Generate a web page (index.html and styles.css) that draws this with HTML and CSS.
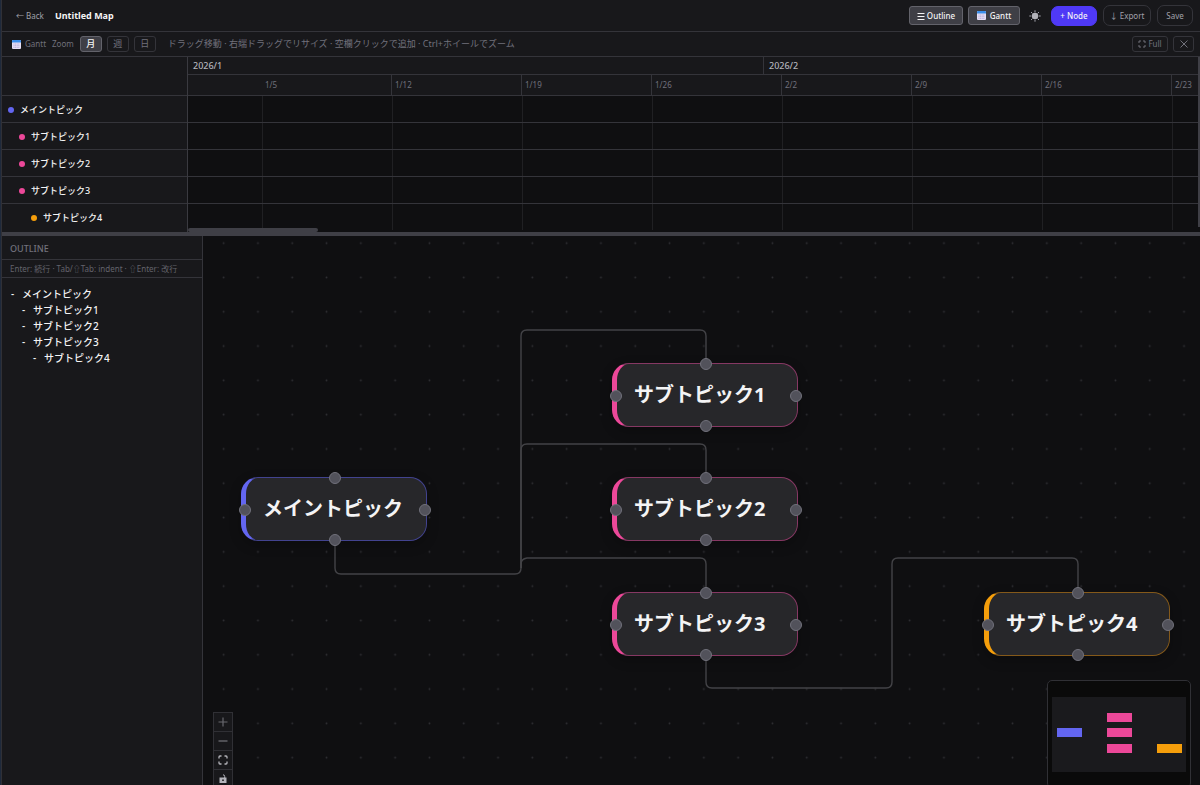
FILE: index.html
```html
<!DOCTYPE html>
<html lang="ja">
<head>
<meta charset="utf-8">
<title>Untitled Map</title>
<link rel="stylesheet" href="styles.css">
</head>
<body>
<div class="app">
  <header class="topbar">
    <a class="back" href="#">← Back</a>
    <h1 class="title">Untitled Map</h1>
    <div class="actions">
      <button class="btn toggle"><svg class="ic" viewBox="0 0 8 8"><path d="M.5 1.500h7M.5 4.500h7M.5 7.500h7" stroke="currentColor" fill="none"/></svg>Outline</button>
      <button class="btn toggle gantt-toggle"><svg class="cal" viewBox="0 0 9 9"><rect width="9" height="9" rx="1" fill="#e6e0f5"/><path d="M0 2.500V1a1 1 0 0 1 1-1h7a1 1 0 0 1 1 1v1.500z" fill="#3b8eea"/><path d="M1.500 4h6M1.500 5.700h6M1.500 7.400h6" stroke="#a99bd0" stroke-width=".8" stroke-dasharray="1 .6"/></svg>Gantt</button>
      <button class="sun" aria-label="Theme"><svg viewBox="0 0 12 12"><circle cx="6" cy="6" r="3.200" fill="#b4b4bb"/><path d="M6 .3v2M6 9.700v2M.3 6h2M9.700 6h2M2 2l1.400 1.400M8.600 8.600l1.400 1.400M2 10l1.400-1.400M8.600 3.400l1.400-1.400" stroke="#a1a1aa" stroke-width="1"/></svg></button>
      <button class="btn primary">+ Node</button>
      <button class="btn ghost">↓ Export</button>
      <button class="btn ghost">Save</button>
    </div>
  </header>

  <section class="gantt">
    <div class="gantt-bar">
      <svg class="cal" viewBox="0 0 9 9"><rect width="9" height="9" rx="1" fill="#e6e0f5"/><path d="M0 2.500V1a1 1 0 0 1 1-1h7a1 1 0 0 1 1 1v1.500z" fill="#3b8eea"/><path d="M1.500 4h6M1.500 5.700h6M1.500 7.400h6" stroke="#a99bd0" stroke-width=".8" stroke-dasharray="1 .6"/></svg>
      <span class="gantt-name">Gantt</span>
      <span class="zoom-name">Zoom</span>
      <button class="zoom active">月</button>
      <button class="zoom">週</button>
      <button class="zoom">日</button>
      <span class="hint">ドラッグ移動 · 右端ドラッグでリサイズ · 空欄クリックで追加 · Ctrl+ホイールでズーム</span>
      <button class="small"><svg class="ic" viewBox="0 0 8 8"><path d="M1 3V1h2M5 1h2v2M7 5v2H5M3 7H1V5" stroke="currentColor" fill="none"/></svg>Full</button>
      <button class="small close" aria-label="Close"><svg class="ic" viewBox="0 0 8 8"><path d="M.5 .5l7 7M7.500 .5l-7 7" stroke="currentColor" fill="none"/></svg></button>
    </div>
    <div class="chart">
      <div class="names">
        <div class="names-head"></div>
        <div class="name"><i class="dot indigo"></i>メイントピック</div>
        <div class="name l1"><i class="dot pink"></i>サブトピック1</div>
        <div class="name l1"><i class="dot pink"></i>サブトピック2</div>
        <div class="name l1"><i class="dot pink"></i>サブトピック3</div>
        <div class="name l2"><i class="dot amber"></i>サブトピック4</div>
      </div>
      <div class="timeline">
        <div class="months"><span>2026/1</span><span>2026/2</span></div>
        <div class="weeks"><span></span><span>1/5</span><span>1/12</span><span>1/19</span><span>1/26</span><span>2/2</span><span>2/9</span><span>2/16</span><span>2/23</span></div>
        <div class="row"><i></i><i></i><i></i><i></i><i></i><i></i><i></i><i></i><i></i></div>
        <div class="row"><i></i><i></i><i></i><i></i><i></i><i></i><i></i><i></i><i></i></div>
        <div class="row"><i></i><i></i><i></i><i></i><i></i><i></i><i></i><i></i><i></i></div>
        <div class="row"><i></i><i></i><i></i><i></i><i></i><i></i><i></i><i></i><i></i></div>
        <div class="row"><i></i><i></i><i></i><i></i><i></i><i></i><i></i><i></i><i></i></div>
        <div class="thumb-x"></div>
        <div class="thumb-y"></div>
      </div>
    </div>
  </section>
  <div class="splitter"></div>

  <main class="work">
    <aside class="outline">
      <h2 class="outline-title">OUTLINE</h2>
      <p class="outline-hint">Enter: 続行 · Tab/⇧Tab: indent · ⇧Enter: 改行</p>
      <ul class="tree">
        <li>メイントピック</li>
        <li class="l1">サブトピック1</li>
        <li class="l1">サブトピック2</li>
        <li class="l1">サブトピック3</li>
        <li class="l2">サブトピック4</li>
      </ul>
    </aside>
    <div class="canvas">
      <svg class="edges" aria-hidden="true">
        <defs><pattern id="dots" x="3.500" y="-10" width="34.300" height="34.300" patternUnits="userSpaceOnUse"><circle cx="17.150" cy="17.150" r=".9" fill="#303034"/></pattern></defs>
        <rect width="100%" height="100%" fill="url(#dots)"/>
        <g fill="none" stroke="#434347" stroke-width="1.400">
          <path d="M132 304V332q0 6 6 6H312q6 0 6-6V100q0-6 6-6H497q6 0 6 6V128"/>
          <path d="M318 332V214q0-6 6-6H497q6 0 6 6V242"/>
          <path d="M318 332V328q0-5 6-6H497q6 0 6 6V356"/>
          <path d="M503 418V446q0 6 6 6H683q6 0 6-6V328q0-6 6-6H869q6 0 6 6V356"/>
        </g>
      </svg>
      <div class="node indigo n0">メイントピック<i class="h t"></i><i class="h b"></i><i class="h l"></i><i class="h r"></i></div>
      <div class="node pink n1">サブトピック1<i class="h t"></i><i class="h b"></i><i class="h l"></i><i class="h r"></i></div>
      <div class="node pink n2">サブトピック2<i class="h t"></i><i class="h b"></i><i class="h l"></i><i class="h r"></i></div>
      <div class="node pink n3">サブトピック3<i class="h t"></i><i class="h b"></i><i class="h l"></i><i class="h r"></i></div>
      <div class="node amber n4">サブトピック4<i class="h t"></i><i class="h b"></i><i class="h l"></i><i class="h r"></i></div>
      <div class="controls">
        <button class="dim" aria-label="Zoom in"><svg viewBox="0 0 10 10"><path d="M5 .5v9M.5 5h9" stroke="currentColor" stroke-width="1.200"/></svg></button>
        <button class="dim" aria-label="Zoom out"><svg viewBox="0 0 10 10"><path d="M.5 5h9" stroke="currentColor" stroke-width="1.400"/></svg></button>
        <button aria-label="Fit view"><svg viewBox="0 0 10 10"><path d="M1 3.500V2q0-1 1-1h1.500M6.500 1H8q1 0 1 1v1.500M9 6.500V8q0 1-1 1H6.500M3.500 9H2q-1 0-1-1V6.500" fill="none" stroke="currentColor" stroke-width="1.300"/></svg></button>
        <button aria-label="Lock"><svg viewBox="0 0 10 10"><path d="M6.700 4V2.500q0-1.700-1.700-1.700" fill="none" stroke="currentColor"/><path fill-rule="evenodd" d="M1.500 3.500h7v5.500h-7zM4.200 5.400v1.600h1.600V5.400z" fill="currentColor"/></svg></button>
      </div>
      <div class="minimap">
        <svg viewBox="0 0 142 106">
          <rect x="4" y="16" width="134" height="75" fill="#1a1a1d"/>
          <rect x="9" y="47" width="25" height="9" fill="#6366f1"/>
          <g fill="#ec4899"><rect x="59" y="32" width="25" height="9"/><rect x="59" y="47" width="25" height="9"/><rect x="59" y="63" width="25" height="9"/></g>
          <rect x="109" y="63" width="25" height="9" fill="#f59e0b"/>
        </svg>
      </div>
    </div>
  </main>
</div>
</body>
</html>
```
FILE: styles.css
```css
* { box-sizing: border-box; }
body { margin: 0; background: #0f0f11; color: #f4f4f5; font: 9px/12px "Noto Sans", "Noto Sans CJK JP", sans-serif; }
button { font: inherit; color: inherit; margin: 0; padding: 0; display: flex; align-items: center; justify-content: center; background: none; border: 1px solid #34343a; cursor: pointer; }
.app { height: 100vh; display: flex; flex-direction: column; overflow: hidden; border-left: 1px solid #1e293b; box-shadow: inset 1px 0 #303036; padding-left: 1px; }
.topbar { display: flex; align-items: center; height: 32px; flex: none; padding: 0 7px 0 14px; background: #18181b; border-bottom: 1px solid #34343a; font-size: 8px; }
.back { color: #a1a1aa; text-decoration: none; margin-right: 11px; }
.title { margin: 0; font-size: 9px; font-weight: 700; }
.actions { margin-left: auto; display: flex; align-items: center; }
.btn { height: 21px; border-radius: 7px; white-space: nowrap; margin-left: 6px; }
.ic { width: 8px; height: 8px; margin-right: 2px; flex: none; }
.cal { width: 9px; height: 9px; flex: none; }
.toggle { height: 19px; width: 54px; background: #3f3f46; border-color: #63636b; border-radius: 3px; font-weight: 500; }
.gantt-toggle { width: 52px; margin-left: 5px; }
.toggle .cal { margin-right: 4px; }
.sun { width: 12px; height: 12px; border: 0; margin: 0 4px 0 9px; }
.sun svg { width: 12px; height: 12px; }
.primary { width: 46px; height: 20px; background: #4f39f6; border-color: #4f39f6; font-weight: 500; }
.ghost { width: 48px; color: #a1a1aa; }
.ghost:last-child { width: 36px; }

.gantt { flex: none; background: #18181b; }
.gantt-bar { display: flex; align-items: center; height: 25px; padding: 0 6px 0 10px; border-bottom: 1px solid #34343a; color: #71717b; font-size: 8px; }
.gantt-name { margin-left: 4px; }
.zoom-name { margin: 0 6px; }
.zoom { width: 22px; height: 16px; border-radius: 3px; margin-right: 5px; font-size: 9px; }
.zoom.active { background: #3f3f46; border-color: #63636b; color: #f4f4f5; font-weight: 500; }
.hint { margin: 0 auto 0 7px; white-space: nowrap; font-size: 9px; }
.small { width: 36px; height: 16px; border-radius: 3px; }
.small.close { width: 21px; margin-left: 5px; }
.close .ic { margin: 0; }
.chart { display: flex; height: 175px; overflow: hidden; }
.names { flex: none; width: 186px; border-right: 1px solid #3a3a40; }
.names-head { height: 39px; border-bottom: 1px solid #34343a; }
.name { height: 27px; display: flex; align-items: center; gap: 6px; padding: 1px 0 0 6px; border-bottom: 1px solid #34343a; font-weight: 500; }
.name.l1 { padding-left: 17px; }
.name.l2 { padding-left: 29px; }
.name:last-child, .row:nth-child(7) { border-bottom-color: transparent; }
.dot { width: 6px; height: 6px; border-radius: 50%; }
.dot.indigo { background: #6366f1; }
.dot.pink { background: #ec4899; }
.dot.amber { background: #f59e0b; }
.timeline { flex: 1; min-width: 0; overflow: hidden; position: relative; background: #0f0f11; }
.months { display: grid; grid-template-columns: 575px 1fr; height: 18px; line-height: 18px; background: #18181b; border-bottom: 1px solid #34343a; color: #b4b4bb; font-weight: 500; }
.months span { padding-left: 5px; }
.months span + span { border-left: 1px solid #34343a; }
.weeks, .row { display: grid; grid-template-columns: 74px repeat(8, 130px); border-bottom: 1px solid #34343a; }
.weeks { grid-template-columns: 74px 129px repeat(7, 130px); height: 21px; line-height: 20px; background: #18181b; color: #71717b; font-size: 8px; }
.weeks span { padding-left: 3px; }
.weeks span:nth-child(n+3) { border-left: 1px solid #34343a; }
.row { height: 27px; }
.row i + i { border-left: 1px solid #202023; }
.thumb-x { position: absolute; left: 0; bottom: 0; width: 130px; height: 4px; background: #3f3f46; border-radius: 2px; }
.thumb-y { position: absolute; right: 0; top: 0; width: 2px; height: 170px; background: #3f3f46; }
.splitter { height: 4px; flex: none; background: #3f3f46; }

.work { flex: 1; min-height: 0; display: flex; }
.outline { flex: none; width: 201px; background: #18181b; border-right: 1px solid #34343a; }
.outline-title { margin: 0; padding: 0 8px; height: 24px; line-height: 25px; font-size: 9px; font-weight: 500; color: #71717b; border-bottom: 1px solid #34343a; }
.outline-hint { margin: 0; padding: 0 8px; height: 18px; line-height: 18px; font-size: 8px; color: #63636b; border-bottom: 1px solid #34343a; white-space: nowrap; }
.tree { margin: 0; padding: 8px; list-style: none; font-size: 10px; line-height: 16px; font-weight: 500; }
.tree li { display: flex; }
.tree li::before { content: "-"; width: 11px; padding-left: 1px; flex: none; }
.tree .l1 { padding-left: 11px; }
.tree .l2 { padding-left: 22px; }
.canvas { flex: 1; min-width: 0; position: relative; overflow: hidden; background: #0f0f11; }
.edges { position: absolute; inset: 0; width: 100%; height: 100%; }
.node { position: absolute; width: 186px; height: 64px; padding-left: 17px; display: flex; align-items: center; border: 1px solid; border-left-width: 5px; border-radius: 17px; background: #27272a; font-size: 20px; line-height: 28px; font-weight: 700; white-space: nowrap; box-shadow: 0 4px 12px #00000040; }
.node.indigo { border-color: #42438f; border-left-color: #6366f1; }
.node.pink { border-color: #863863; border-left-color: #ec4899; }
.node.amber { border-color: #84591a; border-left-color: #f59e0b; }
.n0 { left: 38px; top: 241px; }
.n1 { left: 409px; top: 127px; }
.n2 { left: 409px; top: 241px; }
.n3 { left: 409px; top: 356px; }
.n4 { left: 781px; top: 356px; }
.h { position: absolute; width: 12px; height: 12px; border-radius: 50%; background: #52525b; border: 1px solid #71717b; }
.t { left: 83px; top: -6px; }
.b { left: 83px; bottom: -6px; }
.l { left: -7px; top: 26px; }
.r { right: -5px; top: 26px; }
.controls { position: absolute; left: 10px; bottom: -4px; width: 20px; border: 1px solid #303035; }
.controls button { width: 18px; height: 19px; border: 0; border-bottom: 1px solid #303035; background: #18181b; color: #b4b4bb; }
.controls button:last-child { height: 18px; border-bottom: 0; }
.controls .dim { color: #68686e; }
.controls svg { width: 10px; height: 10px; }
.minimap { position: absolute; right: 9px; bottom: -3px; width: 144px; height: 108px; border: 1px solid #303035; border-radius: 5px; background: #0a0a0a; overflow: hidden; }
.minimap svg { display: block; width: 142px; height: 106px; }
```
